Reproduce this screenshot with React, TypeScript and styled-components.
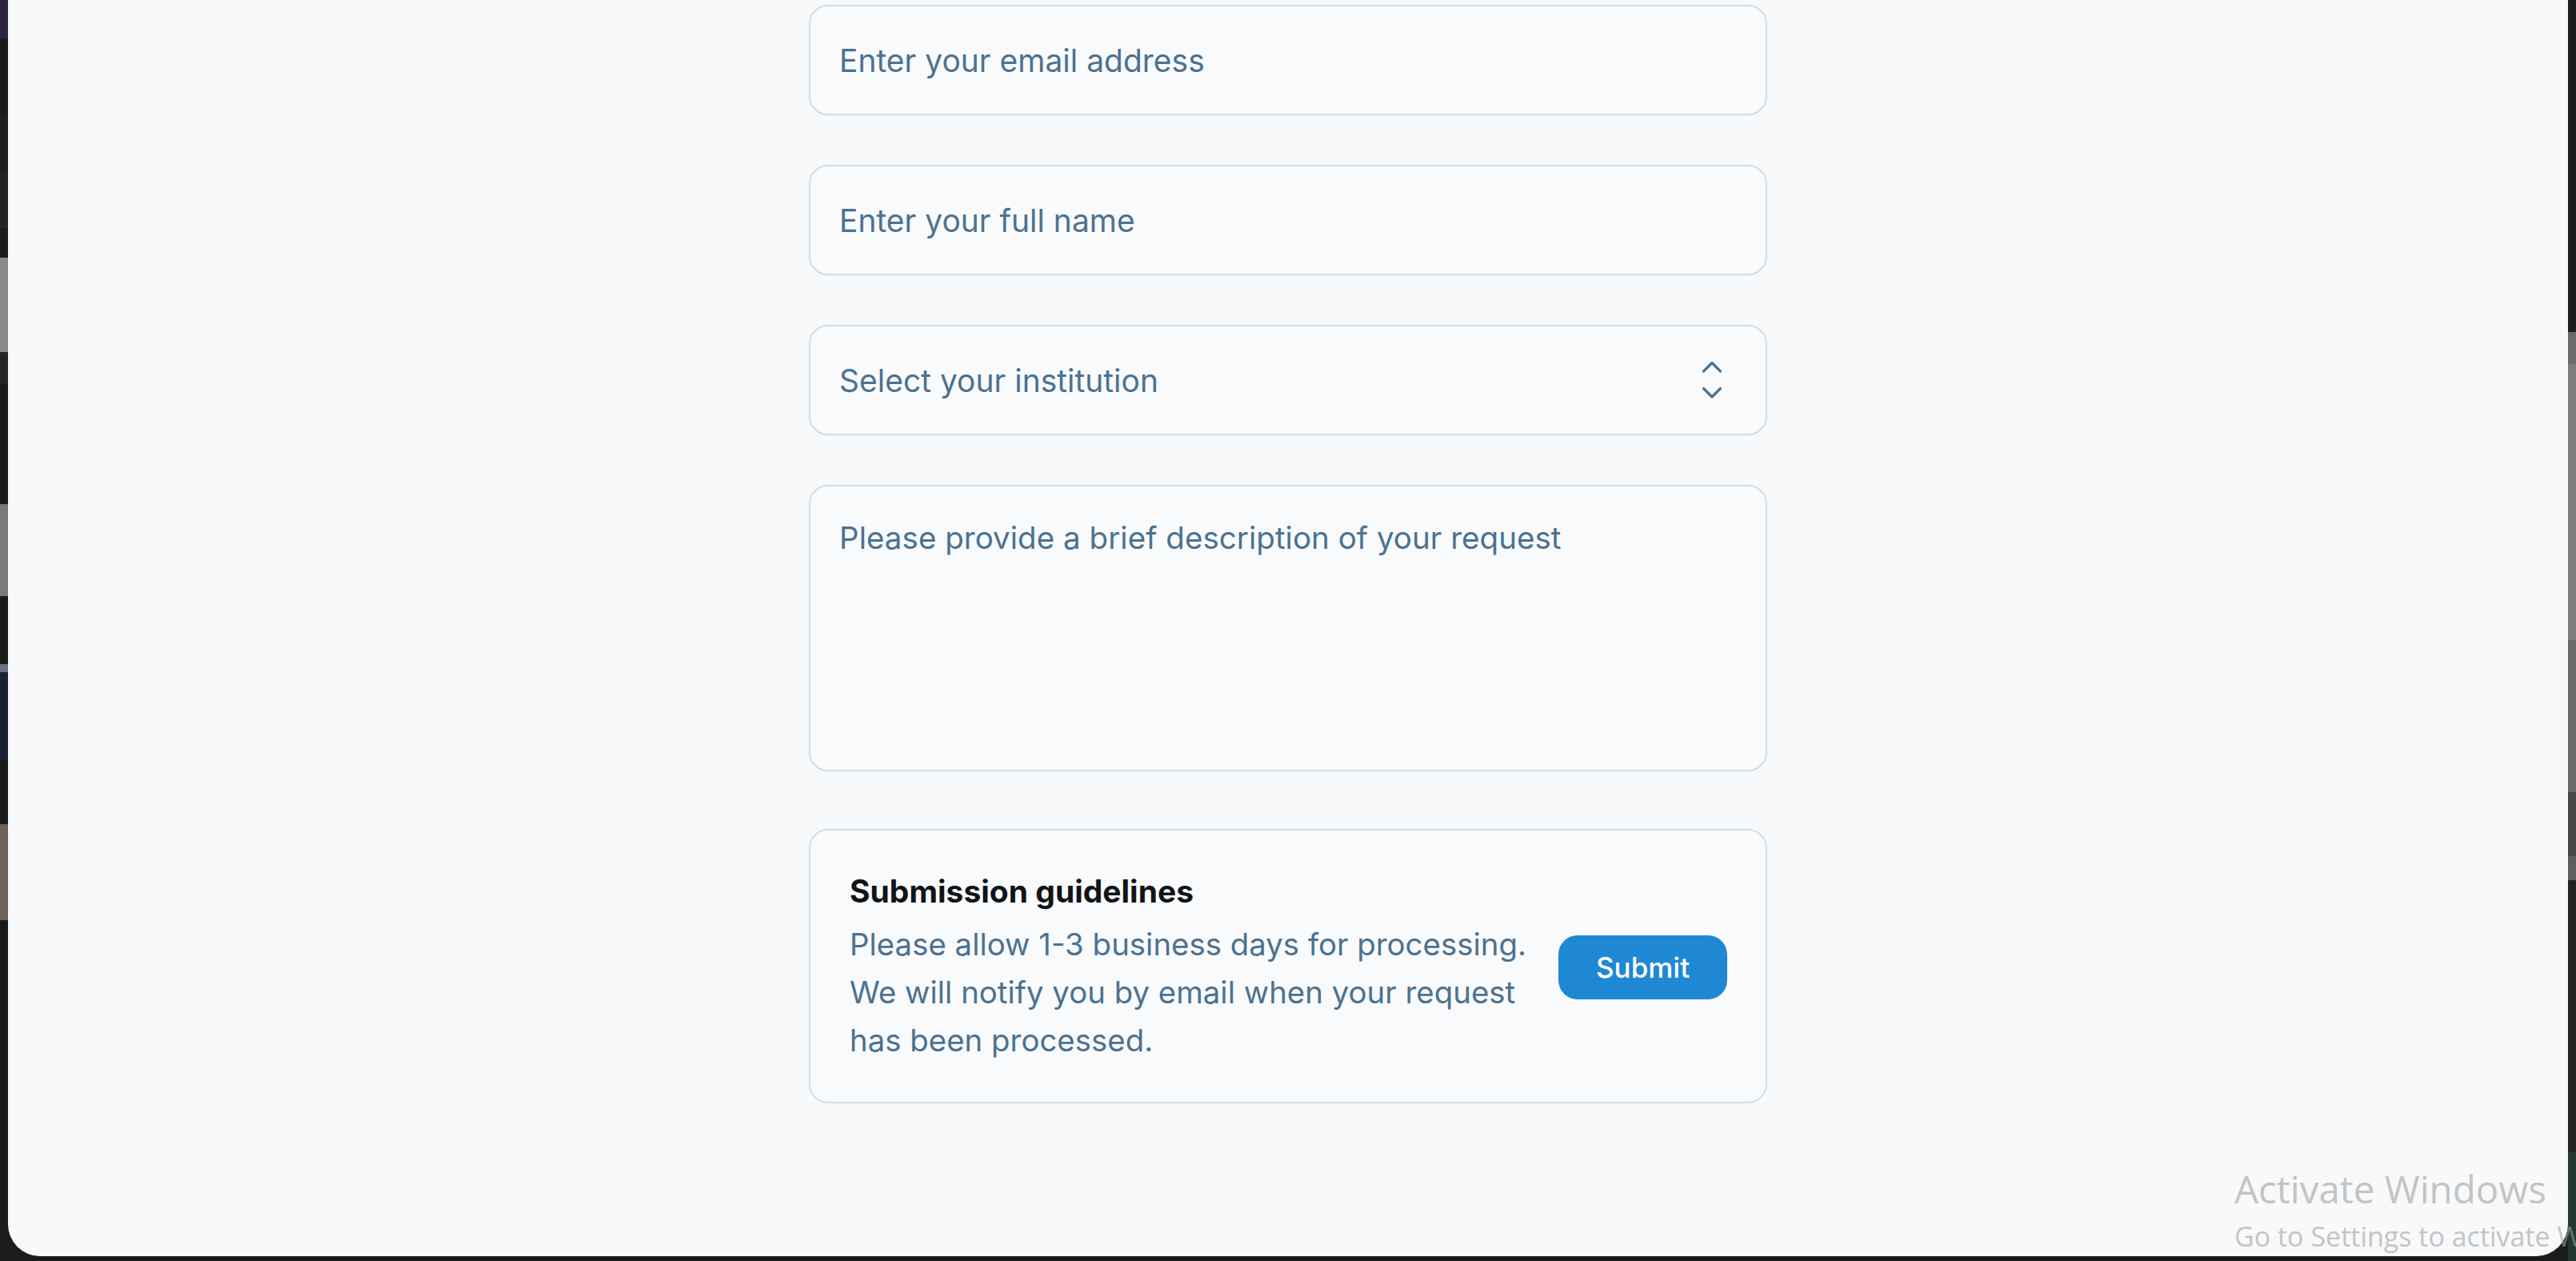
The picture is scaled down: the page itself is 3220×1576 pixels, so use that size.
import React from 'react';
import styled, { createGlobalStyle } from 'styled-components';

/* Request form sheet */

const GlobalStyle = createGlobalStyle`
    html, body {
        margin: 0;
        padding: 0;
        background: #1b1b1b;
        overflow: hidden;
    }

    * {
        box-sizing: border-box;
    }
`

const slate = '#4c7290';

const Screen = styled.div`
    position: relative;
    display: flex;
    flex-direction: row;
    width: 3220px;
    height: 1576px;
    overflow: hidden;
    background: #1b1b1b;
    font-family: Inter, "Noto Sans", sans-serif;
`

const EdgeStrip = styled.div`
    display: flex;
    flex-direction: column;
    width: 10px;
    flex-shrink: 0;
`

const Patch = styled.div<{ $h: number; $c: string }>`
    height: ${props => props.$h}px;
    background: ${props => props.$c};
    flex-shrink: 0;
`

const Sheet = styled.main`
    flex: 1;
    display: flex;
    justify-content: center;
    margin-bottom: 6px;
    padding-top: 6px;
    background: #f7f9fb;
    border-radius: 0 0 40px 40px;
`

const Form = styled.form`
    display: flex;
    flex-direction: column;
    gap: 62px;
    width: 1198px;
`

const fieldBase = `
    width: 100%;
    border: 2px solid #d5dee6;
    border-radius: 24px;
    background: #f8fafc;
    box-shadow: 0 1px 2px rgba(30, 60, 90, 0.05);
    font-family: Inter, "Noto Sans", sans-serif;
    font-size: 39px;
    color: ${slate};
    outline: none;
`

const TextField = styled.input`
    ${fieldBase}
    height: 138px;
    padding: 0 36px;

    &::placeholder {
        color: ${slate};
        opacity: 1;
    }
`

const SelectBox = styled.div`
    ${fieldBase}
    height: 138px;
    display: flex;
    flex-direction: row;
    align-items: center;
    justify-content: space-between;
    padding: 0 54px 0 36px;
`

const MessageField = styled.textarea`
    ${fieldBase}
    height: 358px;
    padding: 37px 36px;
    font-size: 38.6px;
    line-height: 1.45;
    resize: none;

    &::placeholder {
        color: ${slate};
        opacity: 1;
    }
`

const GuideCard = styled.section`
    display: flex;
    flex-direction: row;
    align-items: center;
    gap: 40px;
    margin-top: 10px;
    padding: 50px 49px 47px 49px;
    border: 2px solid #d2dfe5;
    border-radius: 24px;
    background: #f8fafc;
`

const GuideText = styled.div`
    flex: 1;
    display: flex;
    flex-direction: column;

    h3 {
        margin: 0 0 10px 0;
        font-size: 39px;
        line-height: 52px;
        font-weight: 700;
        color: #111418;
    }

    p {
        margin: 0;
        font-size: 38.4px;
        line-height: 60px;
        color: ${slate};
        white-space: nowrap;
    }
`

const SubmitButton = styled.button`
    flex-shrink: 0;
    width: 211px;
    height: 80px;
    border: none;
    border-radius: 24px;
    background: #1f88d4;
    color: #ffffff;
    font-family: Inter, "Noto Sans", sans-serif;
    font-size: 35px;
    font-weight: 500;
    cursor: pointer;
`

const Watermark = styled.div`
    position: absolute;
    left: 2793px;
    top: 1456px;
    display: flex;
    flex-direction: column;
    white-space: nowrap;
    color: rgba(160, 160, 160, 0.62);
    font-family: "Open Sans", "Noto Sans", sans-serif;
    pointer-events: none;

    .title {
        font-size: 47.5px;
        line-height: 60px;
    }

    .sub {
        font-size: 34px;
        line-height: 58px;
    }
`

const leftPatches: [number, string][] = [
    [48, '#2f2540'], [97, '#1c1c1c'], [70, '#1f1f1f'], [70, '#242424'],
    [37, '#1c1c1c'], [118, '#8a8a8a'], [40, '#252525'], [150, '#1c1c1c'],
    [115, '#7a7a7a'], [85, '#1c1c1c'], [10, '#6b7280'], [110, '#1a2231'],
    [80, '#1c1c1c'], [120, '#6e6259'], [426, '#1b1b1b'],
];

const rightPatches: [number, string][] = [
    [415, '#1e1e1e'], [40, '#6b6b6b'], [345, '#7c7c7c'], [190, '#686868'],
    [80, '#474747'], [30, '#5e5e5e'], [340, '#222222'], [136, '#24382f'],
];

const UpDownIcon = () => (
    <svg width="26" height="50" viewBox="0 0 26 50" fill="none"
        stroke={slate} strokeWidth="3.2" strokeLinecap="round" strokeLinejoin="round">
        <path d="M2.5 14 L13 3.5 L23.5 14" />
        <path d="M2.5 35.5 L13 46 L23.5 35.5" />
    </svg>
);

export default function App() {
    return (
        <>
            <GlobalStyle />
            <Screen>
                <EdgeStrip>
                    {leftPatches.map(([h, c], i) => <Patch key={i} $h={h} $c={c} />)}
                </EdgeStrip>

                <Sheet>
                    <Form onSubmit={e => e.preventDefault()}>
                        <TextField type="email" placeholder="Enter your email address" />
                        <TextField type="text" placeholder="Enter your full name" />
                        <SelectBox>
                            <span>Select your institution</span>
                            <UpDownIcon />
                        </SelectBox>
                        <MessageField placeholder="Please provide a brief description of your request" />

                        <GuideCard>
                            <GuideText>
                                <h3>Submission guidelines</h3>
                                <p>
                                    Please allow 1-3 business days for processing.<br />
                                    We will notify you by email when your request<br />
                                    has been processed.
                                </p>
                            </GuideText>
                            <SubmitButton type="submit">Submit</SubmitButton>
                        </GuideCard>
                    </Form>
                </Sheet>

                <EdgeStrip>
                    {rightPatches.map(([h, c], i) => <Patch key={i} $h={h} $c={c} />)}
                </EdgeStrip>

                <Watermark>
                    <span className="title">Activate Windows</span>
                    <span className="sub">Go to Settings to activate Windows.</span>
                </Watermark>
            </Screen>
        </>
    );
}
